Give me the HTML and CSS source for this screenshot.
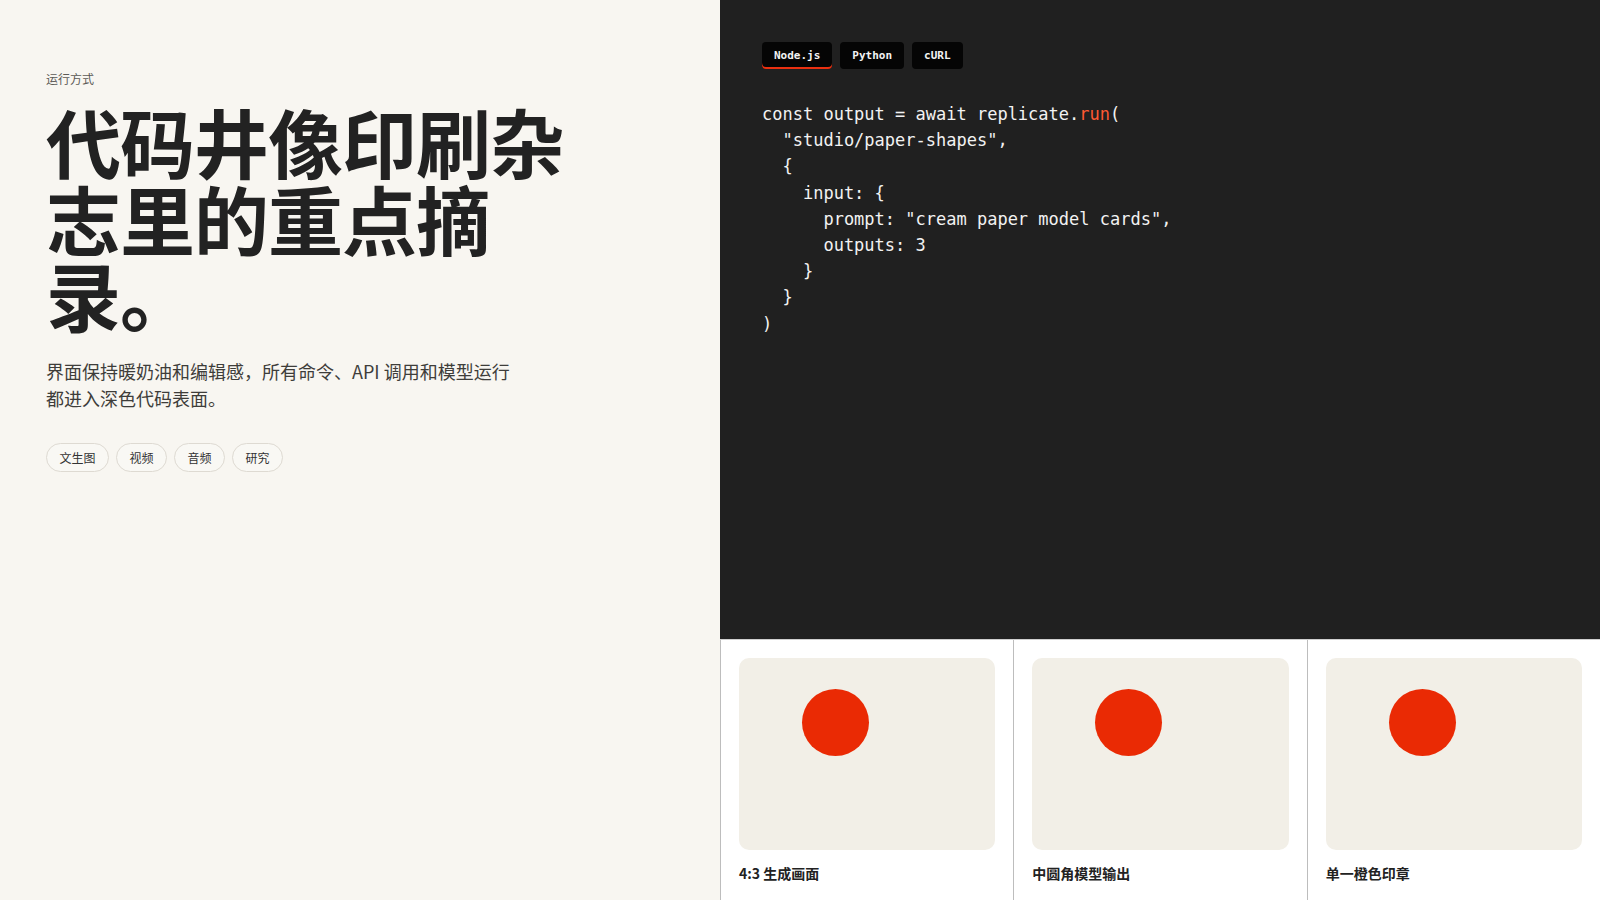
FILE: index.html
```html
<!DOCTYPE html>
<html lang="zh-CN">
<head>
<meta charset="utf-8">
<title>运行方式</title>
<link rel="stylesheet" href="styles.css">
</head>
<body>
<main class="page">
  <section class="intro">
    <p class="eyebrow">运行方式</p>
    <h1 class="headline">代码井像印刷杂志里的重点摘录。</h1>
    <p class="lead">界面保持暖奶油和编辑感，所有命令、API 调用和模型运行都进入深色代码表面。</p>
    <ul class="chips">
      <li class="chip">文生图</li>
      <li class="chip">视频</li>
      <li class="chip">音频</li>
      <li class="chip">研究</li>
    </ul>
  </section>
  <section class="workspace">
    <div class="code-panel">
      <div class="tabs">
        <span class="tab tab-active">Node.js</span>
        <span class="tab">Python</span>
        <span class="tab">cURL</span>
      </div>
<pre class="code">const output = await replicate.<span class="fn">run</span>(
  "studio/paper-shapes",
  {
    input: {
      prompt: "cream paper model cards",
      outputs: 3
    }
  }
)</pre>
    </div>
    <div class="cards">
      <figure class="card">
        <div class="thumb"><span class="dot"></span></div>
        <figcaption class="caption">4:3 生成画面</figcaption>
      </figure>
      <figure class="card">
        <div class="thumb"><span class="dot"></span></div>
        <figcaption class="caption">中圆角模型输出</figcaption>
      </figure>
      <figure class="card">
        <div class="thumb"><span class="dot"></span></div>
        <figcaption class="caption">单一橙色印章</figcaption>
      </figure>
    </div>
  </section>
</main>
</body>
</html>
```

FILE: styles.css
```css
* { box-sizing: border-box; }
html, body { margin: 0; padding: 0; }
body {
  font-family: "Noto Sans CJK SC", "Noto Sans", sans-serif;
  background: #f8f6f1;
  color: #222;
}
.page {
  display: grid;
  grid-template-columns: 720px 1fr;
  height: 900px;
  overflow: hidden;
}
.intro {
  padding: 70px 40px 0 46px;
  background: #f8f6f1;
}
.eyebrow {
  margin: 0;
  font-size: 12px;
  line-height: 18px;
  color: #5c5a56;
}
.headline {
  margin: 15px 0 0;
  max-width: 560px;
  font-size: 75px;
  line-height: 1.02;
  letter-spacing: -1px;
  font-weight: 700;
  color: #222;
}
.lead {
  margin: 25px 0 0;
  max-width: 470px;
  font-size: 18px;
  line-height: 1.54;
  color: #3e3d3a;
}
.chips {
  display: flex;
  gap: 7px;
  margin: 30px 0 0;
  padding: 0;
  list-style: none;
}
.chip {
  height: 29px;
  padding: 0 12.5px;
  border: 1px solid #dedad2;
  border-radius: 15px;
  font-size: 12px;
  line-height: 27px;
  color: #333;
  background: #f9f8f4;
}
.workspace {
  display: flex;
  flex-direction: column;
  background: #fff;
}
.code-panel {
  flex: 1;
  background: #202020;
  padding: 42px 42px 0;
  border-bottom: 1px solid #cfcfcf;
}
.tabs {
  display: flex;
  gap: 8px;
}
.tab {
  height: 27px;
  padding: 0 12px;
  border-radius: 4px;
  background: #050505;
  color: #f3f3f3;
  font-family: "DejaVu Sans Mono", "Liberation Mono", monospace;
  font-size: 11px;
  font-weight: 700;
  line-height: 27px;
}
.tab-active {
  box-shadow: inset 0 -2px 0 #ea3010;
}
.code {
  margin: 32px 0 0;
  font-family: "DejaVu Sans Mono", "Liberation Mono", monospace;
  font-size: 17px;
  line-height: 26.2px;
  color: #f2f2f2;
}
.fn { color: #ff5a33; }
.cards {
  display: grid;
  grid-template-columns: repeat(3, 1fr);
  height: 260px;
}
.card {
  margin: 0;
  padding: 18px;
  border-left: 1px solid #bdbdbd;
}
.thumb {
  position: relative;
  height: 192px;
  border-radius: 10px;
  background: #f2efe7;
}
.dot {
  position: absolute;
  left: 63px;
  top: 31px;
  width: 67px;
  height: 67px;
  border-radius: 50%;
  background: #ea2a04;
}
.caption {
  margin: 14px 0 0;
  font-size: 14px;
  line-height: 18px;
  font-weight: 600;
  color: #222;
}
```
